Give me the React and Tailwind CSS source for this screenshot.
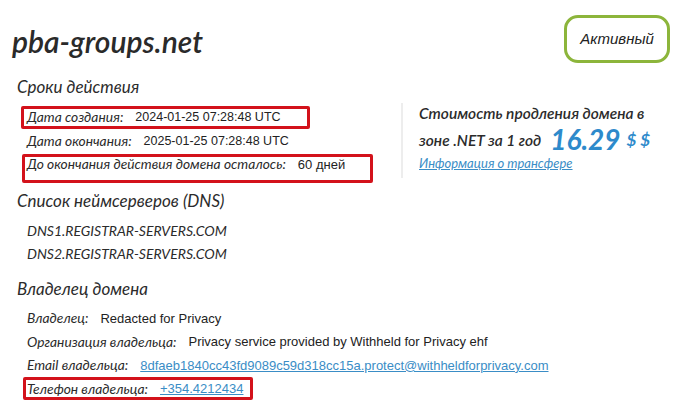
import React from "react";

const head = { fontFamily: "Lato, 'Noto Sans', sans-serif" };
const val = { fontFamily: "'Liberation Sans', Arial, sans-serif" };

function Row({ label, children, box, vs = "text-[13px]" }) {
  return (
    <div className="relative flex items-center h-[23.5px] pl-[10px] text-[#2b2b2b]">
      <span className="italic text-[13.8px]" style={head}>{label}</span>
      <span className={"ml-[12px] text-[#222] " + vs} style={val}>{children}</span>
      {box}
    </div>
  );
}

function RedBox({ className }) {
  return <span className={"absolute border-[3px] border-[#d3121b] rounded-[2px] pointer-events-none " + className} />;
}

export default function App() {
  return (
    <div className="w-[691px] h-[406px] bg-white overflow-hidden relative text-[#2b2b2b]">
      <div className="flex justify-between items-start h-[72px] pl-[12px] pr-[21px] pt-[15px]">
        <div className="mt-[10px] text-[30px] font-semibold italic leading-[32px] text-[#2a2a2a]" style={head}>
          pba-groups.net
        </div>
        <div
          className="w-[106px] h-[48px] flex items-center justify-center border-[3px] border-[#8cb53b] rounded-[14px] italic text-[15px] text-[#222]"
          style={{ fontFamily: "'Liberation Sans', Arial, sans-serif" }}
        >
          Активный
        </div>
      </div>

      <div className="pl-[17px]">
        <div className="h-[34px] leading-[30px] text-[17px] italic" style={head}>Сроки действия</div>
        <div className="flex">
          <div className="w-[384px]">
            <Row label="Дата создания:" vs="text-[12.5px]" box={<RedBox className="left-[4px] top-[-0.5px] w-[289px] h-[23px]" />}>
              2024-01-25 07:28:48 UTC
            </Row>
            <Row label="Дата окончания:" vs="text-[12.5px]">2025-01-25 07:28:48 UTC</Row>
            <Row label="До окончания действия домена осталось:" box={<RedBox className="left-[5px] top-[0.5px] w-[351px] h-[29px]" />}>
              60 дней
            </Row>
          </div>
          <div className="-mt-[3px] h-[75px] border-l-2 border-[#ededed] pl-[16px]" style={head}>
            <div className="text-[15.5px] italic font-semibold leading-[22px] -mt-[1px] text-[#2b2b2b]">
              Стоимость продления домена в
            </div>
            <div className="flex items-end h-[27px] italic font-semibold text-[15.5px] text-[#2b2b2b] leading-[20px]">
              <span className="pb-[1px]">зоне .NET за 1 год</span>
              <span className="ml-[9px] text-[28px] font-bold text-[#2d8acb] leading-[24px]">16.29</span>
              <span className="ml-[6px] pb-[1px] text-[17px] font-bold text-[#2d8acb]">$ $</span>
            </div>
            <div className="mt-[3px] text-[13px] italic underline text-[#3a8dc6] leading-[18px]">
              Информация о трансфере
            </div>
          </div>
        </div>

        <div className="h-[41px] pt-[4px] leading-[37px] text-[17px] italic" style={head}>Список неймсерверов (DNS)</div>
        <div className="pl-[10px] text-[14px] italic" style={head}>
          <div className="h-[23px] leading-[23px]">DNS1.REGISTRAR-SERVERS.COM</div>
          <div className="h-[23px] leading-[23px]">DNS2.REGISTRAR-SERVERS.COM</div>
        </div>

        <div className="h-[41.75px] pt-[6px] leading-[35px] text-[17px] italic" style={head}>Владелец домена</div>
        <Row label="Владелец:">Redacted for Privacy</Row>
        <Row label="Организация владельца:">Privacy service provided by Withheld for Privacy ehf</Row>
        <Row label="Email владельца:">
          <span className="underline text-[#3a8dc6]">8dfaeb1840cc43fd9089c59d318cc15a.protect@withheldforprivacy.com</span>
        </Row>
        <Row label="Телефон владельца:" box={<RedBox className="left-[6px] top-[-0.5px] w-[230px] h-[23px]" />}>
          <span className="underline text-[#3a8dc6]">+354.4212434</span>
        </Row>
      </div>
    </div>
  );
}
